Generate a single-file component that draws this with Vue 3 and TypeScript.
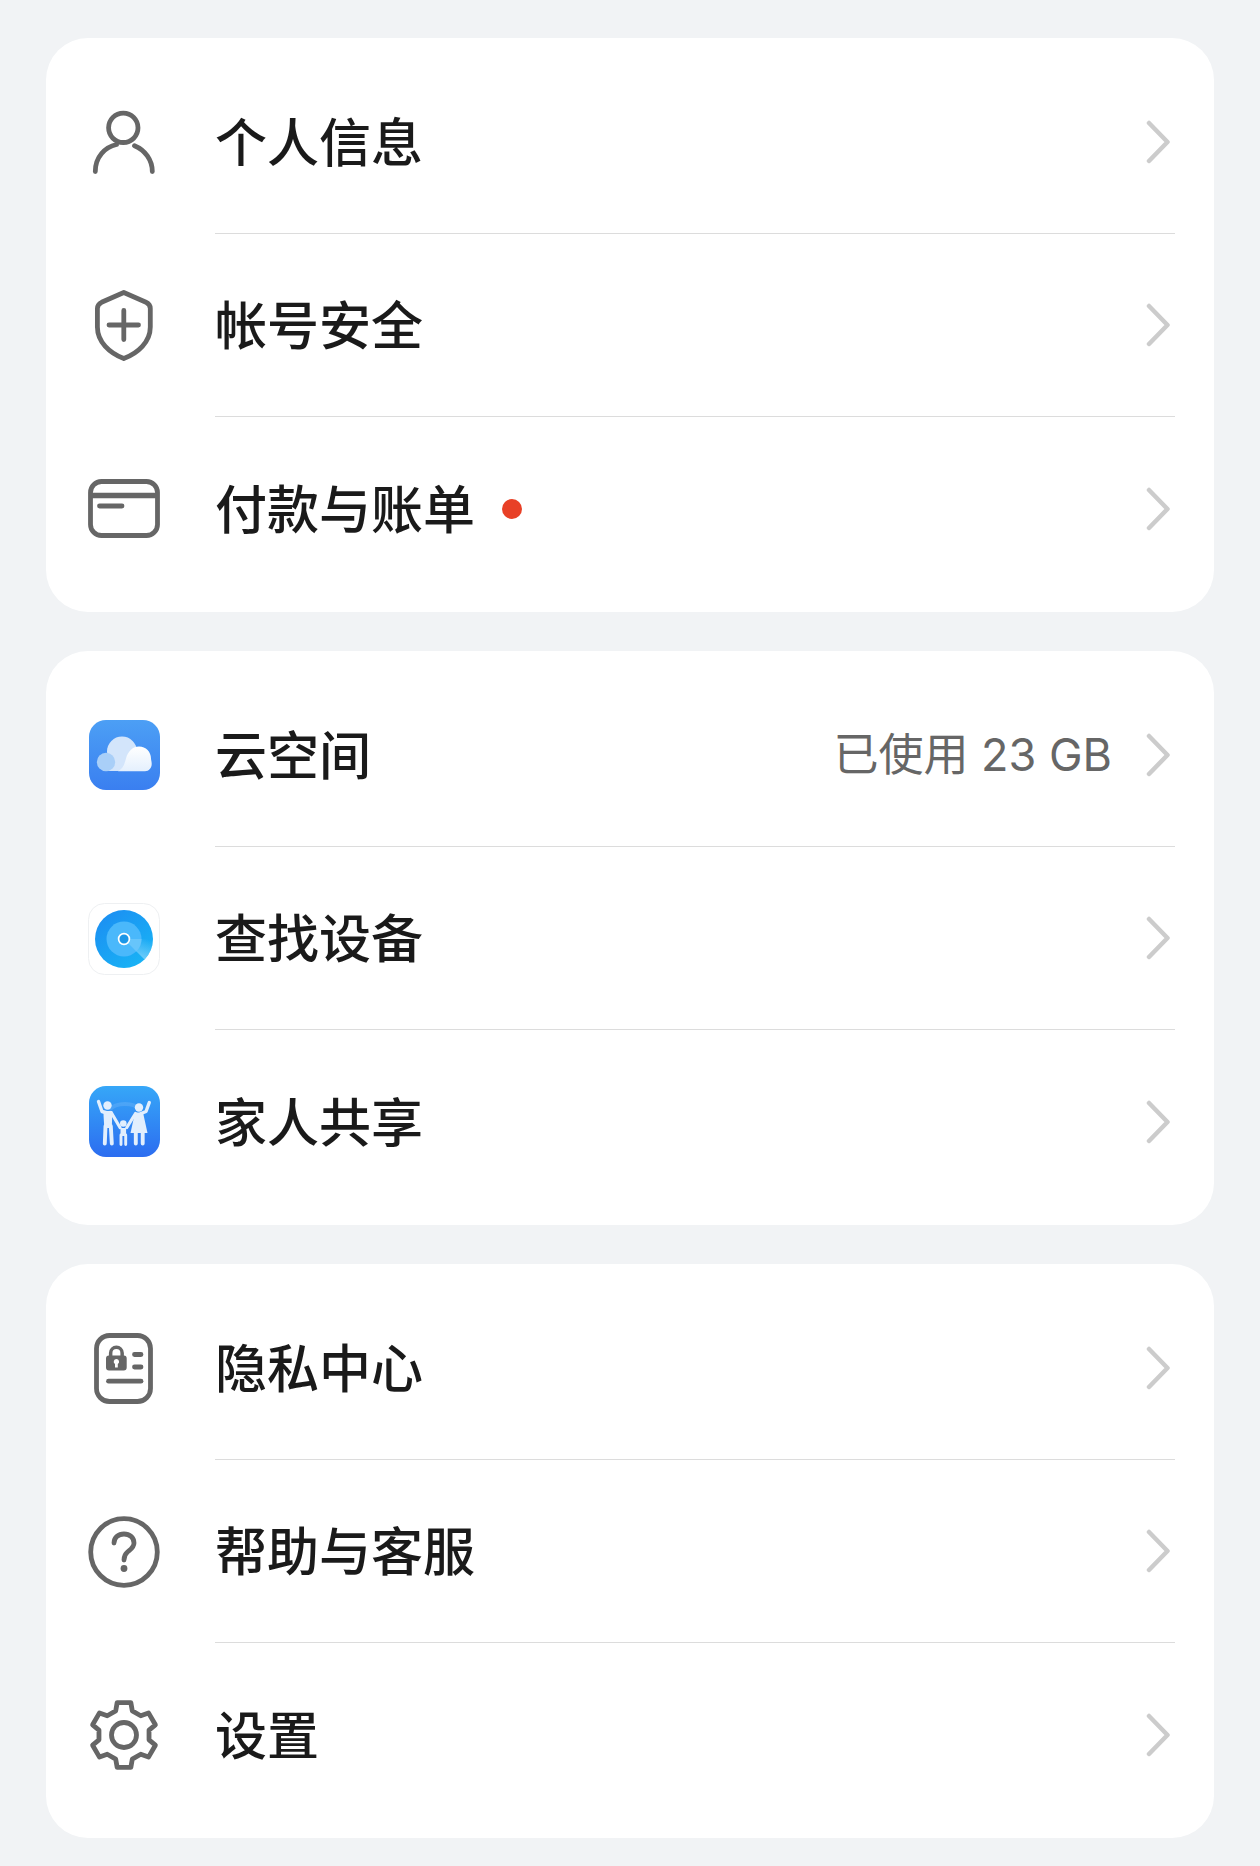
<script setup lang="ts">
interface Row {
  key: string
  label: string
  value?: string
  dot?: boolean
}

const groups: Row[][] = [
  [
    { key: 'person', label: '个人信息' },
    { key: 'shield', label: '帐号安全' },
    { key: 'card', label: '付款与账单', dot: true },
  ],
  [
    { key: 'cloud', label: '云空间', value: '已使用 23 GB' },
    { key: 'find', label: '查找设备' },
    { key: 'family', label: '家人共享' },
  ],
  [
    { key: 'privacy', label: '隐私中心' },
    { key: 'help', label: '帮助与客服' },
    { key: 'gear', label: '设置' },
  ],
]

function buildGear(): string {
  const cx = 36
  const cy = 36
  const outer = 33
  const inner = 25.5
  const pts: string[] = []
  for (let k = 0; k < 6; k++) {
    const a = -90 + k * 60
    const offs: [number, number][] = [
      [-19, inner],
      [-12, outer],
      [12, outer],
      [19, inner],
    ]
    for (const [d, r] of offs) {
      const t = ((a + d) * Math.PI) / 180
      pts.push(`${(cx + r * Math.cos(t)).toFixed(2)} ${(cy + r * Math.sin(t)).toFixed(2)}`)
    }
  }
  return 'M' + pts.join('L') + 'Z'
}
const gearPath = buildGear()
</script>

<template>
  <main class="page">
    <section v-for="(group, g) in groups" :key="g" class="card">
      <div v-for="row in group" :key="row.key" class="row">
        <svg class="icon" viewBox="0 0 72 72" aria-hidden="true">
          <g v-if="row.key === 'person'" class="line">
            <circle cx="35.3" cy="20.8" r="14.7" />
            <path d="M7.3 64.5C7.3 50 17 40 28.500 37.500" />
            <path d="M64.300 64.500C64.300 53 57 43 46.500 38.700" />
          </g>
          <g v-else-if="row.key === 'shield'" class="line">
            <path d="M35.800 2.500L58 12.300Q62.300 14.300 62.300 18.500V37C62.300 52 50 63 35.800 68.500C21.600 63 9.400 52 9.400 37V18.500Q9.400 14.300 13.600 12.300Z" />
            <path d="M35.800 20.500V49.500M21 35H50.500" />
          </g>
          <g v-else-if="row.key === 'card'" class="line">
            <rect x="2.500" y="8.500" width="67" height="54" rx="11" />
            <path d="M3 22.500H69" stroke-width="5.500" stroke-linecap="butt" />
            <path d="M11.500 33H34" />
          </g>
          <g v-else-if="row.key === 'cloud'">
            <defs>
              <linearGradient id="cloudBg" x1="0" y1="0" x2="0" y2="1">
                <stop offset="0" stop-color="#4c9ff5" />
                <stop offset="1" stop-color="#3a7ff0" />
              </linearGradient>
              <linearGradient id="cloudFront" x1="0" y1="0" x2="0" y2="1">
                <stop offset="0" stop-color="#ffffff" />
                <stop offset="1" stop-color="#e4f0fd" />
              </linearGradient>
            </defs>
            <rect x="1" y="0" width="71" height="70" rx="17" fill="url(#cloudBg)" />
            <g transform="translate(1 0)">
              <circle cx="33" cy="31.500" r="15" fill="#d3e5fb" />
              <path d="M18 36H46V51H18Z" fill="#d3e5fb" />
              <circle cx="17" cy="42" r="9.200" fill="#a9cff8" />
              <path d="M29 51.200C34 49 35.500 44 37 38.500C39 31 44 26.500 50 26.500C57 26.500 62 32 62 38.500C62 40 62.700 41 62.700 44C62.700 48 60 51.200 56 51.200Z" fill="url(#cloudFront)" />
            </g>
          </g>
          <g v-else-if="row.key === 'find'">
            <defs>
              <linearGradient id="findBg" x1="0" y1="0" x2="0.800" y2="1">
                <stop offset="0" stop-color="#1c8bf2" />
                <stop offset="1" stop-color="#18b4f5" />
              </linearGradient>
              <linearGradient id="findSweep" x1="0.300" y1="0.900" x2="0.800" y2="0">
                <stop offset="0" stop-color="#79cffb" />
                <stop offset="1" stop-color="#79cffb" stop-opacity="0" />
              </linearGradient>
            </defs>
            <rect x="0.500" y="0.500" width="71" height="71" rx="16" fill="#fff" stroke="#eef0f2" />
            <circle cx="36" cy="36" r="29" fill="url(#findBg)" />
            <path d="M36 36L56.500 56.500A29 29 0 0 0 65 36Z" fill="url(#findSweep)" />
            <circle cx="36" cy="36" r="17.500" fill="#4ab8fb" />
            <path d="M36 36L48.400 48.400A17.500 17.500 0 0 0 53.500 36Z" fill="#67c5fb" />
            <circle cx="36" cy="36" r="5.400" fill="#1c97e8" stroke="#fff" stroke-width="1.700" />
          </g>
          <g v-else-if="row.key === 'family'">
            <defs>
              <linearGradient id="famBg" x1="0" y1="0" x2="0" y2="1">
                <stop offset="0" stop-color="#36a7f8" />
                <stop offset="1" stop-color="#2c6df0" />
              </linearGradient>
            </defs>
            <rect x="1" y="0" width="71" height="71" rx="17" fill="url(#famBg)" />
            <g transform="translate(1 0)">
              <path d="M20 24C27 16 45 16 52 24" fill="none" stroke="#fff" stroke-opacity=".12" stroke-width="4" />
              <g fill="#e2effd">
                <circle cx="18.500" cy="19.500" r="4.200" />
                <circle cx="50" cy="21.500" r="4.200" />
                <circle cx="34.300" cy="37.500" r="3.300" />
                <path d="M46 26.500H54L58.500 47H41.500Z" />
                <path d="M14.300 25H23.300L22.800 42H15.300Z" />
              </g>
              <g fill="none" stroke="#e2effd" stroke-linecap="round" stroke-linejoin="round">
                <path d="M9.500 15.500L13 25.500L18.500 27" stroke-width="3.400" />
                <path d="M16.500 40L15.800 57.500M21.800 40L22.800 57.500" stroke-width="3.900" />
                <path d="M22.500 27L31 41.500" stroke-width="3.200" />
                <path d="M60.300 16.500L57 25.500L52 27.500" stroke-width="3.400" />
                <path d="M46.500 27.500L37.800 41.500" stroke-width="3.200" />
                <path d="M46.800 46V57.500M53.700 46V57.500" stroke-width="3.900" />
                <path d="M34.300 42V50" stroke-width="5.600" stroke-linecap="butt" />
                <path d="M32 49V58.500M36.700 49V58.500" stroke-width="2.900" />
              </g>
            </g>
          </g>
          <g v-else-if="row.key === 'privacy'">
            <g class="line">
              <rect x="8.500" y="2.500" width="54" height="66" rx="13" />
              <path d="M46.500 21.500H53M46.500 34H53" />
              <path d="M20.500 48.200H53" />
            </g>
            <path d="M28.400 12.500A7.500 7.500 0 0 1 35.900 20V22.500A3 3 0 0 1 38.700 25.500V34.500A3 3 0 0 1 35.700 37.500H21A3 3 0 0 1 18 34.500V25.500A3 3 0 0 1 20.900 22.500V20A7.500 7.500 0 0 1 28.400 12.500ZM28.400 16A4 4 0 0 0 24.400 20V22.500H32.400V20A4 4 0 0 0 28.400 16ZM28.400 26A2.700 2.700 0 0 0 27 31V34.500H29.800V31A2.700 2.700 0 0 0 28.400 26Z" fill="#666" fill-rule="evenodd" />
          </g>
          <g v-else-if="row.key === 'help'" class="line">
            <circle cx="36" cy="36" r="33.300" />
            <path d="M26 27C26 21.500 30.500 18 36 18C41.500 18 46 21.500 46 27C46 31.500 42.500 33.500 39.500 36C37 38 36 40 36 44" />
            <circle cx="36" cy="52.500" r="3.400" fill="#666" stroke="none" />
          </g>
          <g v-else-if="row.key === 'gear'" class="line">
            <path :d="gearPath" />
            <circle cx="36" cy="36" r="12.500" />
          </g>
        </svg>
        <div class="body">
          <span class="label">{{ row.label }}</span>
          <span v-if="row.dot" class="dot"></span>
          <span v-if="row.value" class="value">{{ row.value }}</span>
          <svg class="chevron" viewBox="0 0 24 44" aria-hidden="true">
            <path d="M3 3L21.500 22L3 41" />
          </svg>
        </div>
      </div>
    </section>
  </main>
</template>

<style scoped>
.page {
  box-sizing: border-box;
  min-height: 1866px;
  padding: 38px 46px 0;
  display: flex;
  flex-direction: column;
  gap: 39px;
  background: #f1f3f5;
  font-family: "Noto Sans CJK SC", "Noto Sans", sans-serif;
}
.card {
  background: #fff;
  border-radius: 42px;
  padding: 13px 0 12px;
}
.row {
  display: flex;
  align-items: center;
  padding-left: 42px;
}
.icon {
  flex: none;
  width: 72px;
  height: 72px;
  overflow: visible;
}
.line {
  fill: none;
  stroke: #666;
  stroke-width: 4.800;
  stroke-linecap: round;
  stroke-linejoin: round;
}
.body {
  flex: 1;
  box-sizing: border-box;
  height: 183px;
  margin: 0 39px 0 55px;
  padding-right: 5px;
  display: flex;
  align-items: center;
  border-bottom: 1px solid #dcdcdc;
}
.row:last-child .body {
  border-bottom: none;
}
.label {
  margin-bottom: 4px;
  font-size: 52px;
  font-weight: 500;
  line-height: 70px;
  color: #1a1a1a;
}
.dot {
  width: 20px;
  height: 20px;
  margin-left: 27px;
  border-radius: 50%;
  background: #e84026;
}
.value {
  margin-left: auto;
  font-family: Inter, "Noto Sans CJK SC", sans-serif;
  font-size: 45px;
  line-height: 60px;
  color: #666;
}
.chevron {
  flex: none;
  width: 24px;
  height: 44px;
  margin-left: 34px;
  fill: none;
  stroke: #cccccc;
  stroke-width: 4.500;
  stroke-linecap: round;
  stroke-linejoin: round;
}
.dot + .chevron,
.label + .chevron {
  margin-left: auto;
}
</style>
